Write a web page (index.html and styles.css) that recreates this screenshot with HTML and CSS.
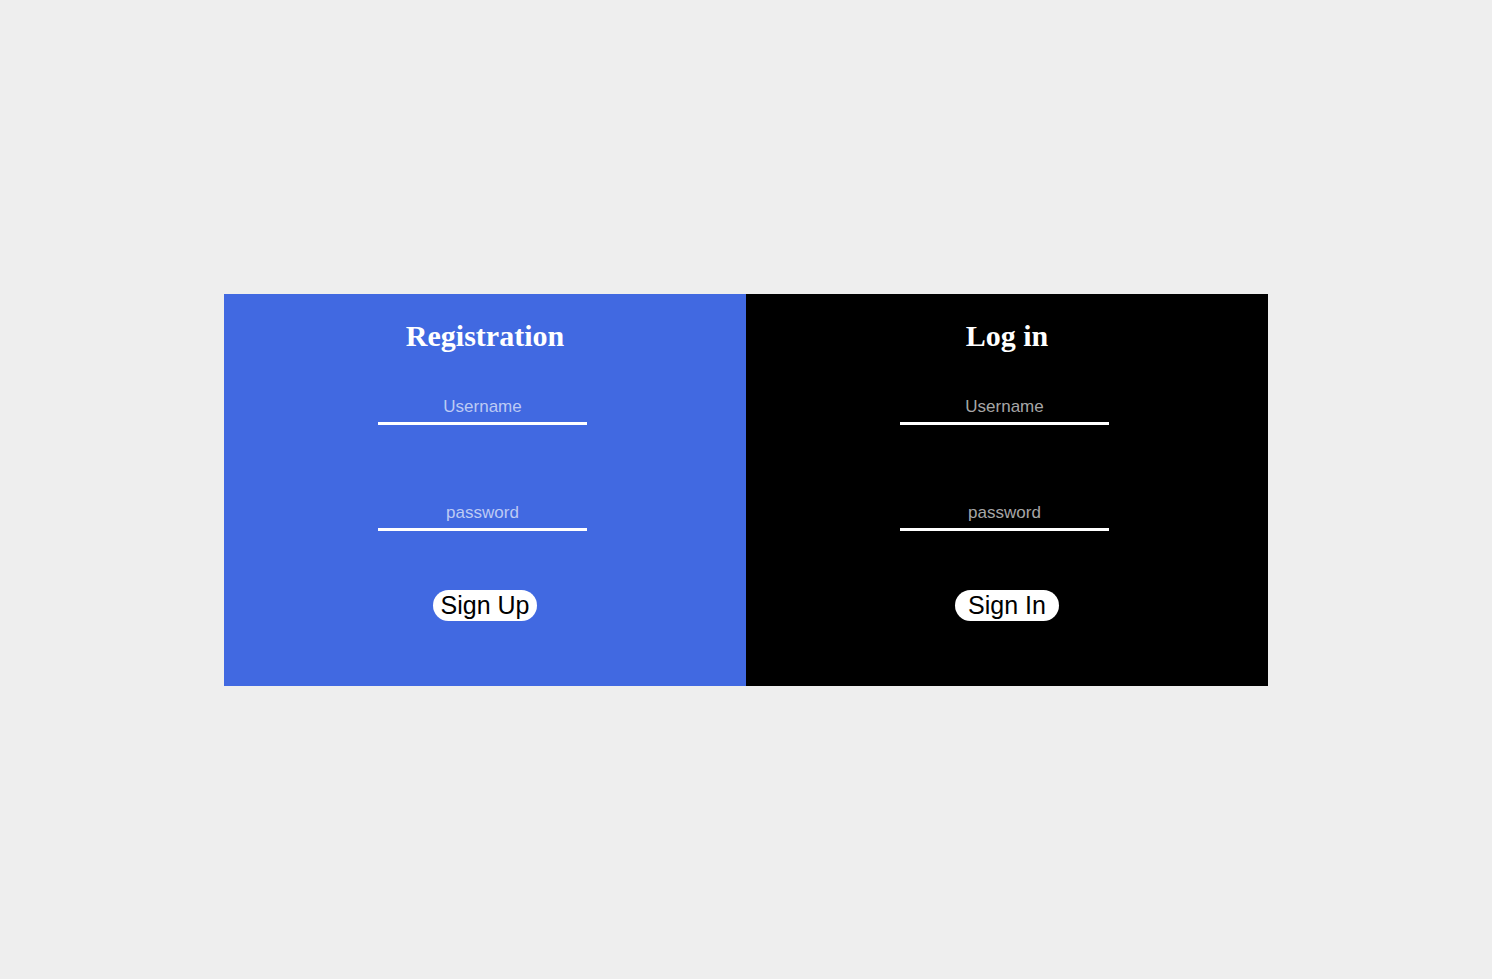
FILE: index.html
```html
<!DOCTYPE html>
<html>
<head>
<meta charset="utf-8">
<link rel="stylesheet" href="styles.css">
</head>
<body>
<div class="wrap">
  <div class="card">
    <form class="panel panel-reg">
      <h2 class="title">Registration</h2>
      <input class="field" type="text" placeholder="Username">
      <input class="field field-pass" type="password" placeholder="password">
      <button class="btn" type="button">Sign Up</button>
    </form>
    <form class="panel panel-log">
      <h2 class="title">Log in</h2>
      <input class="field" type="text" placeholder="Username">
      <input class="field field-pass" type="password" placeholder="password">
      <button class="btn" type="button">Sign In</button>
    </form>
  </div>
</div>
</body>
</html>
```
FILE: styles.css
```css
html, body {
  margin: 0;
  padding: 0;
  background: #eeeeee;
}
.wrap {
  height: 979px;
  display: flex;
  justify-content: center;
  padding-top: 294px;
  box-sizing: border-box;
}
.card {
  display: flex;
  width: 1044px;
  height: 392px;
}
.panel {
  width: 522px;
  height: 392px;
  margin: 0;
  display: flex;
  flex-direction: column;
  align-items: center;
}
.panel-reg { background: #4169e1; }
.panel-log { background: #000000; }
.title {
  margin: 25px 0 0 0;
  font-family: "Liberation Serif", "Times New Roman", serif;
  font-weight: bold;
  font-size: 30px;
  line-height: 34px;
  color: #ffffff;
}
.field {
  margin: 40px 5px 0 0;
  width: 209px;
  box-sizing: border-box;
  padding: 4px 0 5px 0;
  border: none;
  border-bottom: 3px solid #ffffff;
  background: transparent;
  outline: none;
  font-family: "Liberation Sans", Arial, sans-serif;
  font-size: 17px;
  line-height: 20px;
  height: 32px;
  color: #ffffff;
  text-align: center;
}
.field::placeholder {
  color: rgba(255, 255, 255, 0.66);
}
.field-pass {
  margin-top: 74px;
}
.btn {
  margin-top: 59px;
  width: 104px;
  height: 31px;
  padding: 0;
  border: none;
  border-radius: 16px;
  background: #ffffff;
  color: #000000;
  font-family: "Liberation Sans", Arial, sans-serif;
  font-size: 25px;
  line-height: 31px;
  cursor: pointer;
}
```
